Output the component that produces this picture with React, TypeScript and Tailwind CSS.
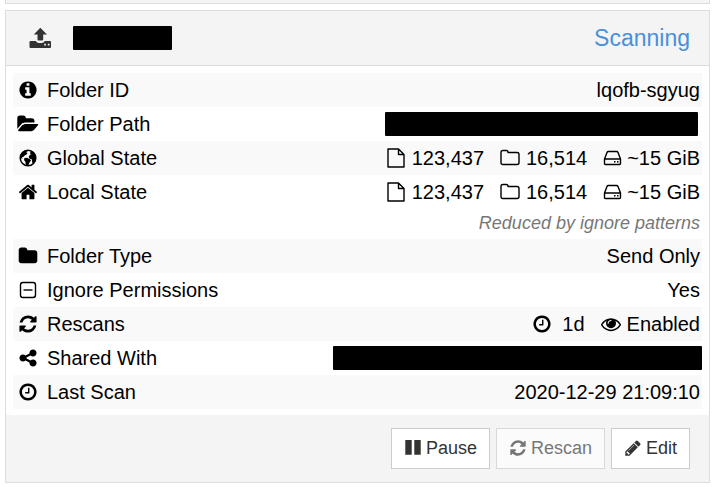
import type { ReactNode } from "react";

const paths = {
  clock: "M1024 544v448q0 14-9 23t-23 9h-320q-14 0-23-9t-9-23v-64q0-14 9-23t23-9h224v-352q0-14 9-23t23-9h64q14 0 23 9t9 23zm416 352q0-148-73-273t-198-198-273-73-273 73-198 198-73 273 73 273 198 198 273 73 273-73 198-198 73-273zm224 0q0 209-103 385.5t-279.5 279.5-385.5 103-385.5-103-279.5-279.5-103-385.5 103-385.5 279.5-279.5 385.5-103 385.5 103 279.5 279.5 103 385.5z",
  info: "M1152 1376v-160q0-14-9-23t-23-9h-96v-512q0-14-9-23t-23-9h-320q-14 0-23 9t-9 23v160q0 14 9 23t23 9h96v320h-96q-14 0-23 9t-9 23v160q0 14 9 23t23 9h448q14 0 23-9t9-23zm-128-896v-160q0-14-9-23t-23-9h-192q-14 0-23 9t-9 23v160q0 14 9 23t23 9h192q14 0 23-9t9-23zm640 416q0 209-103 385.5t-279.5 279.5-385.5 103-385.5-103-279.5-279.5-103-385.5 103-385.5 279.5-279.5 385.5-103 385.5 103 279.5 279.5 103 385.5z",
  folderOpen: "M1815 952q0 31-31 66l-336 396q-43 51-120.5 86.5t-143.5 35.5h-1088q-34 0-60.5-13t-26.5-43q0-31 31-66l336-396q43-51 120.5-86.5t143.5-35.5h1088q34 0 60.5 13t26.5 43zm-343-344v160h-832q-94 0-197 47.5t-164 119.5l-337 396-5 6q0-4-.5-12.5t-.5-12.5v-960q0-92 66-158t158-66h320q92 0 158 66t66 158v32h544q92 0 158 66t66 158z",
  folder: "M1728 608v704q0 92-66 158t-158 66h-1216q-92 0-158-66t-66-158v-960q0-92 66-158t158-66h320q92 0 158 66t66 158v32h672q92 0 158 66t66 158z",
  home: "M1472 992v480q0 26-19 45t-45 19h-384v-384h-256v384h-384q-26 0-45-19t-19-45v-480q0-1 .5-3t.5-3l575-474 575 474q1 2 1 6zm223-69l-62 74q-8 9-21 11h-3q-13 0-21-7l-692-577-692 577q-12 8-24 7-13-2-21-11l-62-74q-8-10-7-23.5t11-21.5l719-599q32-26 76-26t76 26l244 204v-195q0-14 9-23t23-9h192q14 0 23 9t9 23v408l219 182q10 8 11 21.5t-7 23.5z",
  refresh: "M1639 1056q0 5-1 7-64 268-268 434.5t-478 166.5q-146 0-282.5-55t-243.5-157l-129 129q-19 19-45 19t-45-19-19-45v-448q0-26 19-45t45-19h448q26 0 45 19t19 45-19 45l-137 137q71 66 161 102t187 36q134 0 250-65t186-179q11-17 53-117 8-23 30-23h192q13 0 22.5 9.5t9.5 22.5zm25-800v448q0 26-19 45t-45 19h-448q-26 0-45-19t-19-45 19-45l138-138q-148-137-349-137-134 0-250 65t-186 179q-11 17-53 117-8 23-30 23h-199q-13 0-22.5-9.5t-9.5-22.5v-7q65-268 270-434.5t480-166.5q146 0 284 55.5t245 156.5l130-129q19-19 45-19t45 19 19 45z",
  share: "M1344 1024q133 0 226.5 93.5t93.5 226.5-93.5 226.5-226.5 93.5-226.5-93.5-93.5-226.5q0-12 2-34l-360-180q-92 86-218 86-133 0-226.5-93.5t-93.5-226.5 93.5-226.5 226.5-93.5q126 0 218 86l360-180q-2-22-2-34 0-133 93.5-226.5t226.5-93.5 226.5 93.5 93.5 226.5-93.5 226.5-226.5 93.5q-126 0-218-86l-360 180q2 22 2 34t-2 34l360 180q92-86 218-86z",
  eye: "M1664 960q-152-236-381-353 61 104 61 225 0 185-131.5 316.5t-316.5 131.5-316.5-131.5-131.5-316.5q0-121 61-225-229 117-381 353 133 205 333.5 326.5t434.5 121.5 434.5-121.5 333.5-326.5zm-720-384q0-20-14-34t-34-14q-125 0-214.5 89.5t-89.5 214.5q0 20 14 34t34 14 34-14 14-34q0-86 61-147t147-61q20 0 34-14t14-34zm848 384q0 34-20 69-140 230-376.5 368.5t-499.5 138.5-499.5-139-376.5-368q-20-35-20-69t20-69q140-229 376.5-368t499.5-139 499.5 139 376.5 368q20 35 20 69z",
  pencil: "M491 1536l91-91-235-235-91 91v107h128v128h107zm523-928q0-22-22-22-10 0-17 7l-542 542q-7 7-7 17 0 22 22 22 10 0 17-7l542-542q7-7 7-17zm-54-192l416 416-832 832h-416v-416zm683 96q0 53-37 90l-166 166-416-416 166-165q36-38 90-38 53 0 91 38l235 234q37 39 37 91z",
  pause: "M128 96h640v1472h-640zM1024 96h640v1472h-640z",
};

function Icon({ name, className = "size-5" }: { name: keyof typeof paths; className?: string }) {
  return (
    <svg viewBox="0 0 1792 1792" fill="currentColor" aria-hidden="true" className={`${className} shrink-0 overflow-visible`}>
      <path d={paths[name]} />
    </svg>
  );
}

function Line({ children, className = "" }: { children: ReactNode; className?: string }) {
  return (
    <svg viewBox="0 0 20 20" fill="none" stroke="currentColor" strokeWidth="1.4" strokeLinejoin="round" aria-hidden="true" className={`${className} size-5 shrink-0`}>
      {children}
    </svg>
  );
}

function Upload() {
  return (
    <svg viewBox="0 0 22 22" fill="currentColor" aria-hidden="true" className="size-[22px] shrink-0">
      <path d="M11.300.8 18 7.500h-3.800v5q0 1-1 1H9.500q-1 0-1-1v-5H4.800z" />
      <path fillRule="evenodd" d="M1.500 14h5.300q1.200 2 3 2h3q1.800 0 3-2h5.200q1 0 1 1v5q0 1-1 1H1.500q-1 0-1-1v-5q0-1 1-1zM15.200 16.800v1.700h1.700v-1.700zM18.800 16.800v1.700h1.700v-1.700z" />
    </svg>
  );
}

function Globe() {
  return (
    <svg viewBox="0 0 20 20" aria-hidden="true" className="size-5 shrink-0">
      <circle cx="10" cy="10" r="7.800" fill="none" stroke="currentColor" strokeWidth="1.500" />
      <path fill="currentColor" d="M2 8.500 3.500 5 6.500 2.500 10 2l-.5 1.500-1.500.5 1.500 1-1 1.500-1.500.8-1.500 1.500-1.500.5.5 1.500-1.500-.5zM6.500 10l2.500-.3 3 1.600 1 1.200-1.500 2L10.500 17 9 18l-1.500-2v-2L6 12zM12 2.200 16 4.500l2 4.500-.5 4-2 2.500-1.200-.5-.3-2.500-.5-1.500-2-.3-.8-2 1.300-1.900 1.500-.5-1.700-.8.8-1.500z" />
    </svg>
  );
}

function Counts() {
  return (
    <span className="flex items-center justify-end">
      <Line className="mr-[6px]"><path d="M2 1h10.500L18 6.500V19H2zM12.500 1v5.500H18" /></Line>
      123,437
      <Line className="mr-[6px] ml-4"><path d="M1 4.500Q1 2.500 3 2.500h3.500Q8 2.500 8 4.500h9q2 0 2 2v8q0 2-2 2H3q-2 0-2-2z" /></Line>
      16,514
      <Line className="mr-1 ml-4"><path d="M1.500 11 4 4.500Q4.400 3.500 5.400 3.500h8.200Q14.600 3.500 15 4.500L17.500 11v4.500q0 1-1 1h-14q-1 0-1-1zH17.500M11 13.800h1.500M14 13.800h1.500" /></Line>
      ~15 GiB
    </span>
  );
}

function Redacted({ className }: { className: string }) {
  return <span className={`block h-6 rounded-[1px] bg-black ${className}`} />;
}

function Row({ icon, label, children, note }: { icon: ReactNode; label: string; children: ReactNode; note?: string }) {
  return (
    <tr className="odd:bg-[#f9f9f9]">
      <th scope="row" className="h-[34px] pl-[5px] text-left align-top font-normal">
        <span className="flex h-[34px] items-center gap-[9px] whitespace-nowrap">{icon}{label}</span>
      </th>
      <td className="pr-[2px] text-right align-top">
        <div className="flex h-[34px] items-center justify-end">{children}</div>
        {note && <div className="h-[30px] text-lg leading-7 text-[#777] italic">{note}</div>}
      </td>
    </tr>
  );
}

const button = "flex h-[41px] items-center gap-1 border border-[#ccc] bg-white px-3 pb-[2px] text-[#333]";

export default function App() {
  return (
    <main className="bg-white pr-[2px] pl-[5px] font-['Liberation_Sans',Arial,sans-serif] text-xl text-black">
      <div className="h-1 border-x border-b border-[#ddd] bg-[#f4f4f4]" />
      <section className="mt-[6px] border border-[#ddd]">
        <header className="flex h-[55px] items-center border-b border-[#ddd] bg-[#f4f4f4] pr-[19px] pl-[23px] text-[#333]">
          <Upload />
          <Redacted className="ml-[22px] w-[99px]" />
          <h2 className="ml-auto text-[23px] leading-8 text-[#4a90d9]">Scanning</h2>
        </header>
        <div className="px-[7px] pt-[7px] pb-[6px]">
          <table className="w-full border-collapse">
            <tbody>
              <Row icon={<Icon name="info" />} label="Folder ID">lqofb-sgyug</Row>
              <Row icon={<Icon name="folderOpen" />} label="Folder Path"><Redacted className="mr-[2px] w-[313px]" /></Row>
              <Row icon={<Globe />} label="Global State"><Counts /></Row>
              <Row icon={<Icon name="home" />} label="Local State" note="Reduced by ignore patterns"><Counts /></Row>
              <Row icon={<Icon name="folder" />} label="Folder Type">Send Only</Row>
              <Row icon={<Line><rect x="2.500" y="2.500" width="15" height="15" rx="2.500" /><path d="M5.500 10h9" /></Line>} label="Ignore Permissions">Yes</Row>
              <Row icon={<Icon name="refresh" />} label="Rescans">
                <Icon name="clock" /><span className="mr-4 ml-[10px]">1d</span><Icon name="eye" /><span className="ml-[6px]">Enabled</span>
              </Row>
              <Row icon={<Icon name="share" />} label="Shared With"><Redacted className="-mr-[2px] w-[369px]" /></Row>
              <Row icon={<Icon name="clock" />} label="Last Scan">2020-12-29 21:09:10</Row>
            </tbody>
          </table>
        </div>
        <footer className="flex justify-end gap-[6px] bg-[#f4f4f4] pt-[13px] pr-[19px] pb-[13px] text-lg">
          <button type="button" className={button}><Icon name="pause" className="size-[18px]" />Pause</button>
          <button type="button" disabled className={`${button} opacity-65`}><Icon name="refresh" className="size-[18px]" />Rescan</button>
          <button type="button" className={button}><Icon name="pencil" className="size-[18px]" />Edit</button>
        </footer>
      </section>
    </main>
  );
}
